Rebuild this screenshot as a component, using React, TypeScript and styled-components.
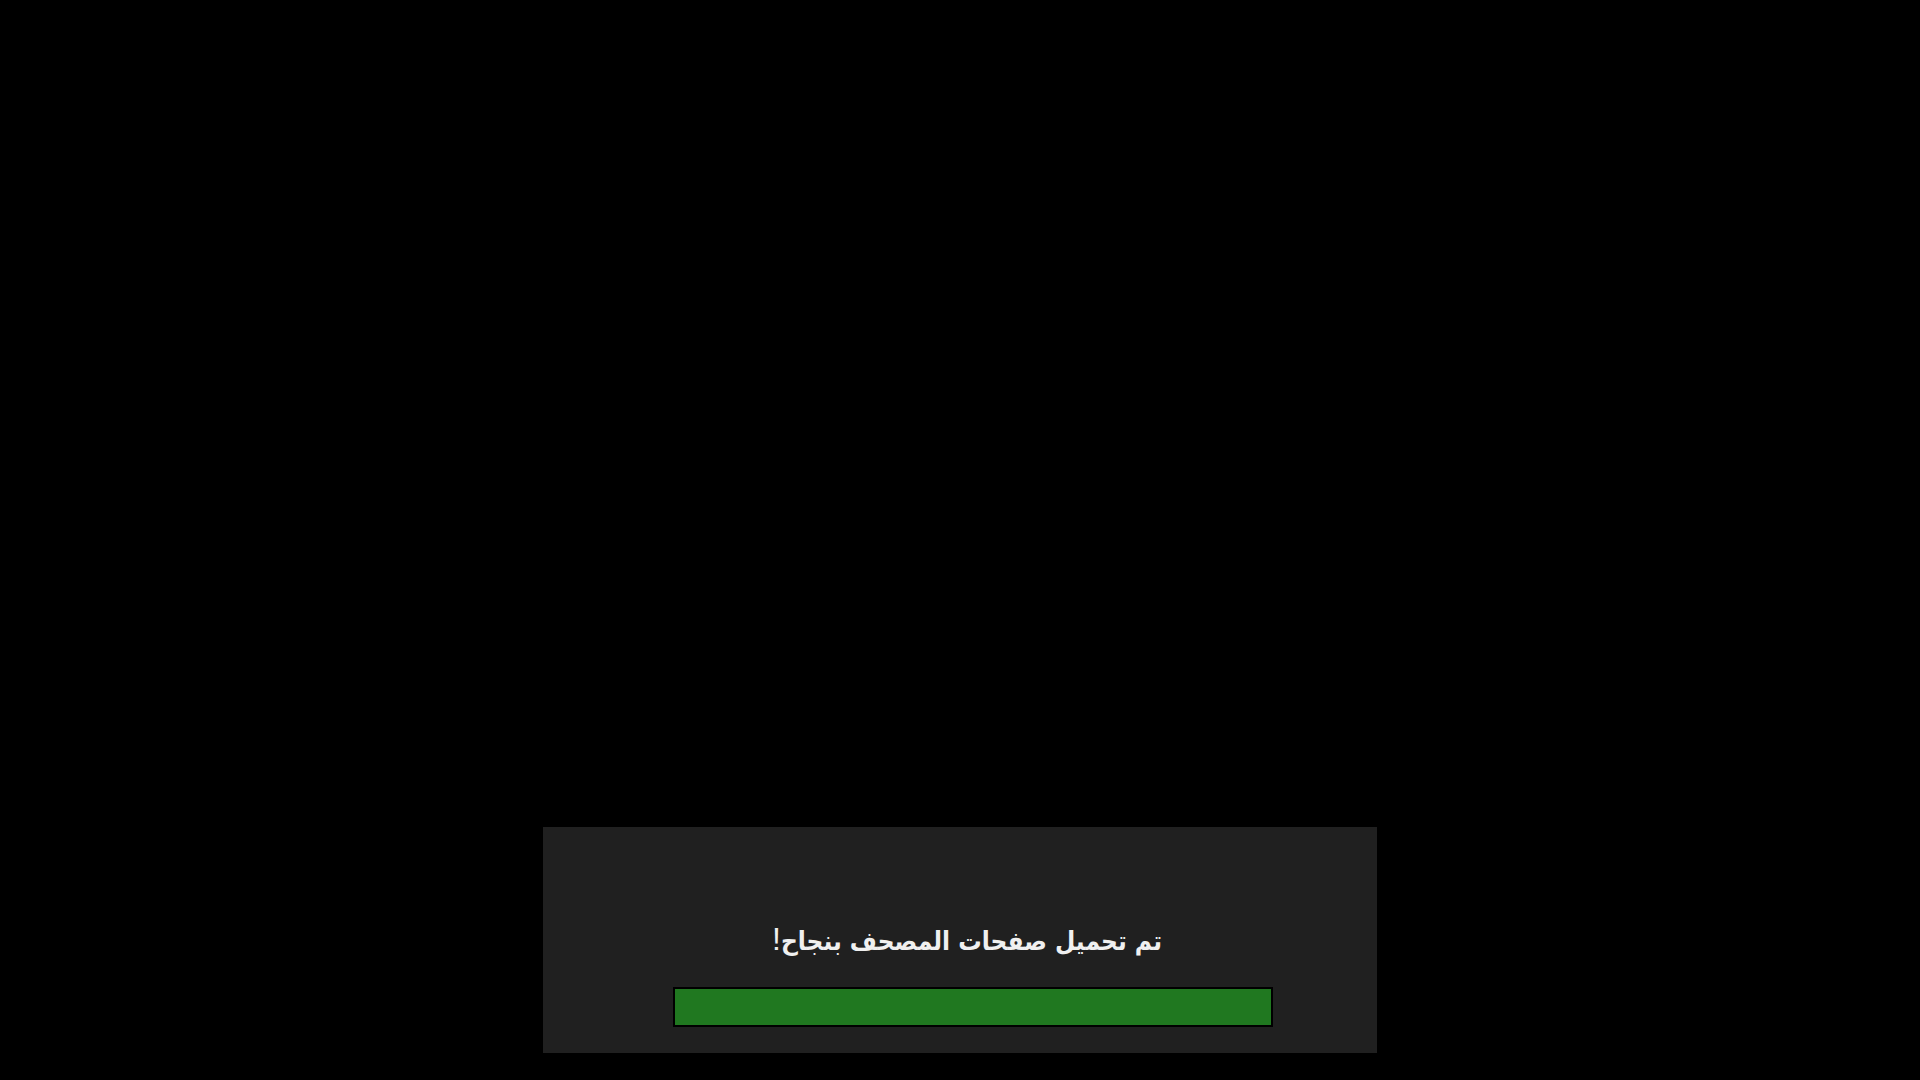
import React from "react";
import styled, { createGlobalStyle } from "styled-components";

const GlobalStyle = createGlobalStyle`
  *, *::before, *::after { box-sizing: border-box; }
  body {
    margin: 0;
    background: #000000;
  }
`;

const Screen = styled.main`
  display: flex;
  min-height: 100vh;
  align-items: flex-end;
  justify-content: center;
  padding-bottom: 27px;
  background: #000000;
`;

const Panel = styled.section`
  display: flex;
  flex-direction: column;
  align-items: stretch;
  gap: 26px;
  width: 834px;
  max-width: 100%;
  padding: 94px 104px 26px 130px;
  background: #202020;
`;

const Message = styled.label`
  padding-right: 12px;
  color: #f0f0f0;
  font-family: "DejaVu Sans Condensed", "DejaVu Sans", sans-serif;
  font-size: 26px;
  font-weight: 700;
  line-height: 40px;
  text-align: center;
  white-space: nowrap;
`;

const Mark = styled.span`
  font-family: "Liberation Sans", Arial, sans-serif;
  font-size: 32px;
  font-weight: 400;
  line-height: 1;
`;

const Progress = styled.progress`
  display: block;
  appearance: none;
  width: 100%;
  height: 40px;
  border: 2px solid #000000;
  background: #202020;

  &::-webkit-progress-inner-element,
  &::-webkit-progress-bar {
    background: #202020;
  }
  &::-webkit-progress-value {
    background: #207820;
  }
  &::-moz-progress-bar {
    background: #207820;
  }
`;

export default function App() {
  return (
    <>
      <GlobalStyle />
      <Screen lang="ar">
        <Panel>
          <Message htmlFor="pages-progress" dir="rtl">
            تم تحميل صفحات المصحف بنجاح<Mark>!</Mark>
          </Message>
          <Progress id="pages-progress" value={100} max={100} />
        </Panel>
      </Screen>
    </>
  );
}
